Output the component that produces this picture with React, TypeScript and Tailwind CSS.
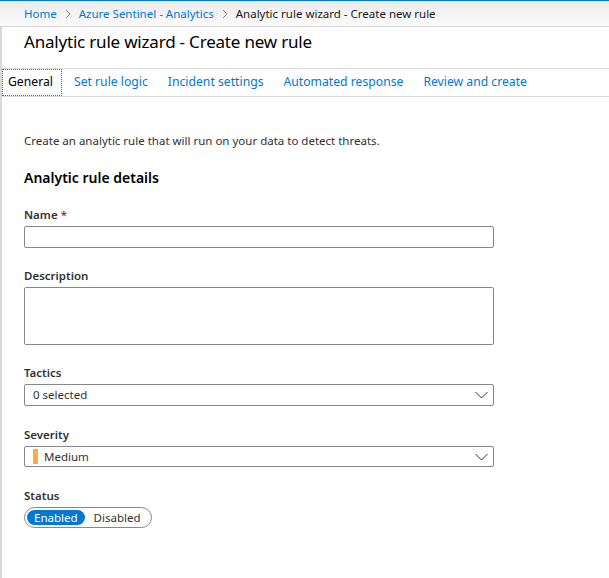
import React from 'react';

const Chevron = () => (
  <svg width="13" height="8" viewBox="0 0 13 8" className="shrink-0">
    <path d="M0.5 1 L6.5 7 L12.5 1" fill="none" stroke="#333" strokeWidth="1" />
  </svg>
);

const Crumb = () => (
  <svg width="6" height="10" viewBox="0 0 6 10" className="shrink-0">
    <path d="M1 1 L5 5 L1 9" fill="none" stroke="#8a8886" strokeWidth="1" />
  </svg>
);

const Label: React.FC<{ text: string; required?: boolean }> = ({ text, required }) => (
  <div className="text-[11.5px] font-semibold text-[#323130] leading-[16px] mb-[3px]">
    {text}
    {required && <span className="text-[#a4262c] ml-[3px]">*</span>}
  </div>
);

const tabs = ['General', 'Set rule logic', 'Incident settings', 'Automated response', 'Review and create'];

export default function App() {
  return (
    <div className="w-[609px] h-[578px] bg-white overflow-hidden flex flex-col text-[#323130] font-['Noto_Sans',sans-serif]">
      <div className="h-[1px] bg-[#0078d4]" />
      <div className="h-[26px] flex items-center pl-[24px] text-[11.5px] bg-gradient-to-b from-[#ececec] to-[#fbfbfb] border-b border-[#d4d4d4] gap-[8px]">
        <span className="text-[#0078d4]">Home</span>
        <Crumb />
        <span className="text-[#0078d4]">Azure Sentinel - Analytics</span>
        <Crumb />
        <span className="text-[#1a1a1a]">Analytic rule wizard - Create new rule</span>
      </div>
      <div className="flex-1 border-l-2 border-[#d9d9d9] flex flex-col">
        <div className="h-[41px] pt-[3px] pl-[22px] text-[17px] leading-[23px] text-black tracking-[-0.2px]">
          Analytic rule wizard - Create new rule
        </div>
        <div className="h-[29px] border-t border-b border-[#dcdcdc] flex items-stretch text-[12.2px]">
          {tabs.map((t, i) => (
            <div
              key={t}
              className={
                i === 0
                  ? 'pl-[5px] pr-[8px] flex items-center text-black border border-dotted border-[#0078d4] mr-[2px]'
                  : 'px-[10px] flex items-center text-[#0078d4]'
              }
            >
              {t}
            </div>
          ))}
        </div>
        <div className="pl-[22px] pt-[36px] w-[492px]">
          <div className="text-[11.5px] leading-[16px]">Create an analytic rule that will run on your data to detect threats.</div>
          <div className="text-[14px] font-semibold mt-[19px] leading-[20px] text-black">Analytic rule details</div>

          <div className="mt-[19px]">
            <Label text="Name" required />
            <div className="h-[22px] border border-[#8a8886] rounded-[2px]" />
          </div>

          <div className="mt-[20px]">
            <Label text="Description" />
            <div className="h-[58px] border border-[#8a8886] rounded-[2px]" />
          </div>

          <div className="mt-[20px]">
            <Label text="Tactics" />
            <div className="h-[22px] border border-[#8a8886] rounded-[2px] flex items-center justify-between pl-[8px] pr-[5px] text-[11.5px]">
              <span>0 selected</span>
              <Chevron />
            </div>
          </div>

          <div className="mt-[21px]">
            <Label text="Severity" />
            <div className="h-[21px] border border-[#8a8886] rounded-[2px] flex items-center justify-between pl-[8px] pr-[5px] text-[11.5px]">
              <div className="flex items-center gap-[6px]">
                <span className="w-[5px] h-[15px] bg-[#ffaa44]" />
                <span>Medium</span>
              </div>
              <Chevron />
            </div>
          </div>

          <div className="mt-[21px]">
            <Label text="Status" />
            <div className="flex w-fit items-center h-[21px] border border-[#8a8886] rounded-full p-[2px] text-[11.5px]">
              <span className="h-full px-[7px] rounded-full bg-[#0078d4] text-white flex items-center">Enabled</span>
              <span className="px-[9px]">Disabled</span>
            </div>
          </div>
        </div>
      </div>
    </div>
  );
}
